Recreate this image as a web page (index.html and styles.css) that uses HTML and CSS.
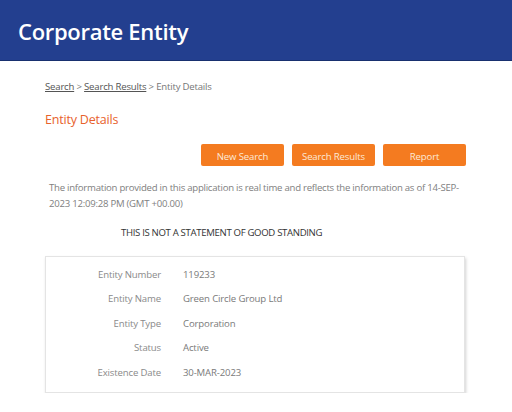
FILE: index.html
```html
<!DOCTYPE html>
<html>
<head>
<meta charset="utf-8">
<link rel="stylesheet" href="styles.css">
</head>
<body>
<header class="topbar"><h1 class="title">Corporate Entity</h1></header>
<main class="content">
  <nav class="crumbs"><a href="#">Search</a> &gt; <a href="#">Search Results</a> &gt; Entity Details</nav>
  <h2 class="section">Entity Details</h2>
  <div class="actions">
    <button class="btn">New Search</button>
    <button class="btn">Search Results</button>
    <button class="btn">Report</button>
  </div>
  <p class="info">The information provided in this application is real time and reflects the information as of 14-SEP-2023 12:09:28 PM (GMT +00.00)</p>
  <p class="notice">THIS IS NOT A STATEMENT OF GOOD STANDING</p>
  <section class="card">
    <div class="row"><span class="label">Entity Number</span><span class="value">119233</span></div>
    <div class="row"><span class="label">Entity Name</span><span class="value">Green Circle Group Ltd</span></div>
    <div class="row"><span class="label">Entity Type</span><span class="value">Corporation</span></div>
    <div class="row"><span class="label">Status</span><span class="value">Active</span></div>
    <div class="row"><span class="label">Existence Date</span><span class="value">30-MAR-2023</span></div>
  </section>
</main>
</body>
</html>
```
FILE: styles.css
```css
html, body { margin: 0; padding: 0; background: #fff; }
body { font-family: "Open Sans", "Liberation Sans", sans-serif; }
.topbar {
  height: 61px;
  background: #233f8f;
  border-bottom: 1px solid #18306f;
  display: flex;
  align-items: center;
  padding-left: 18px;
  box-sizing: border-box;
}
.title {
  margin: 0;
  color: #fff;
  font-size: 22px;
  font-weight: 600;
  letter-spacing: -0.3px;
  padding-top: 2px;
}
.content { margin: 0 46px 0 45px; }
.crumbs {
  margin-top: 19px;
  font-size: 9.6px;
  line-height: 14px;
  color: #777;
  letter-spacing: -0.2px;
}
.crumbs a { color: #555; text-decoration: underline; }
.section {
  margin: 17px 0 0;
  font-size: 12.5px;
  line-height: 17px;
  font-weight: 400;
  color: #e8622c;
  letter-spacing: -0.2px;
}
.actions {
  display: flex;
  justify-content: flex-end;
  gap: 8px;
  margin-top: 16px;
}
.btn {
  width: 83px;
  height: 22px;
  border: none;
  border-radius: 2px;
  background: #f47b20;
  color: #fde9d6;
  font-family: inherit;
  font-size: 9.6px;
  letter-spacing: -0.15px;
  font-weight: 400;
  padding: 2px 0 0;
}
.info {
  margin: 14px -10px 0 4px;
  font-size: 9.6px;
  line-height: 16px;
  color: #808080;
  letter-spacing: -0.25px;
}
.notice {
  margin: 14px 0 0 76px;
  font-size: 9.6px;
  line-height: 14px;
  color: #333;
  letter-spacing: -0.33px;
}
.card {
  margin-top: 16px;
  width: 420px;
  height: 137px;
  box-sizing: border-box;
  border: 1px solid #e4e4e4;
  box-shadow: 1px 2px 3px rgba(0,0,0,0.18);
  padding-top: 5px;
}
.row {
  display: grid;
  grid-template-columns: 115px 1fr;
  column-gap: 22px;
  height: 24.5px;
  align-items: center;
  font-size: 9.6px;
  letter-spacing: -0.15px;
}
.label { text-align: right; color: #8a8a8a; }
.value { color: #7a7a7a; }
```
